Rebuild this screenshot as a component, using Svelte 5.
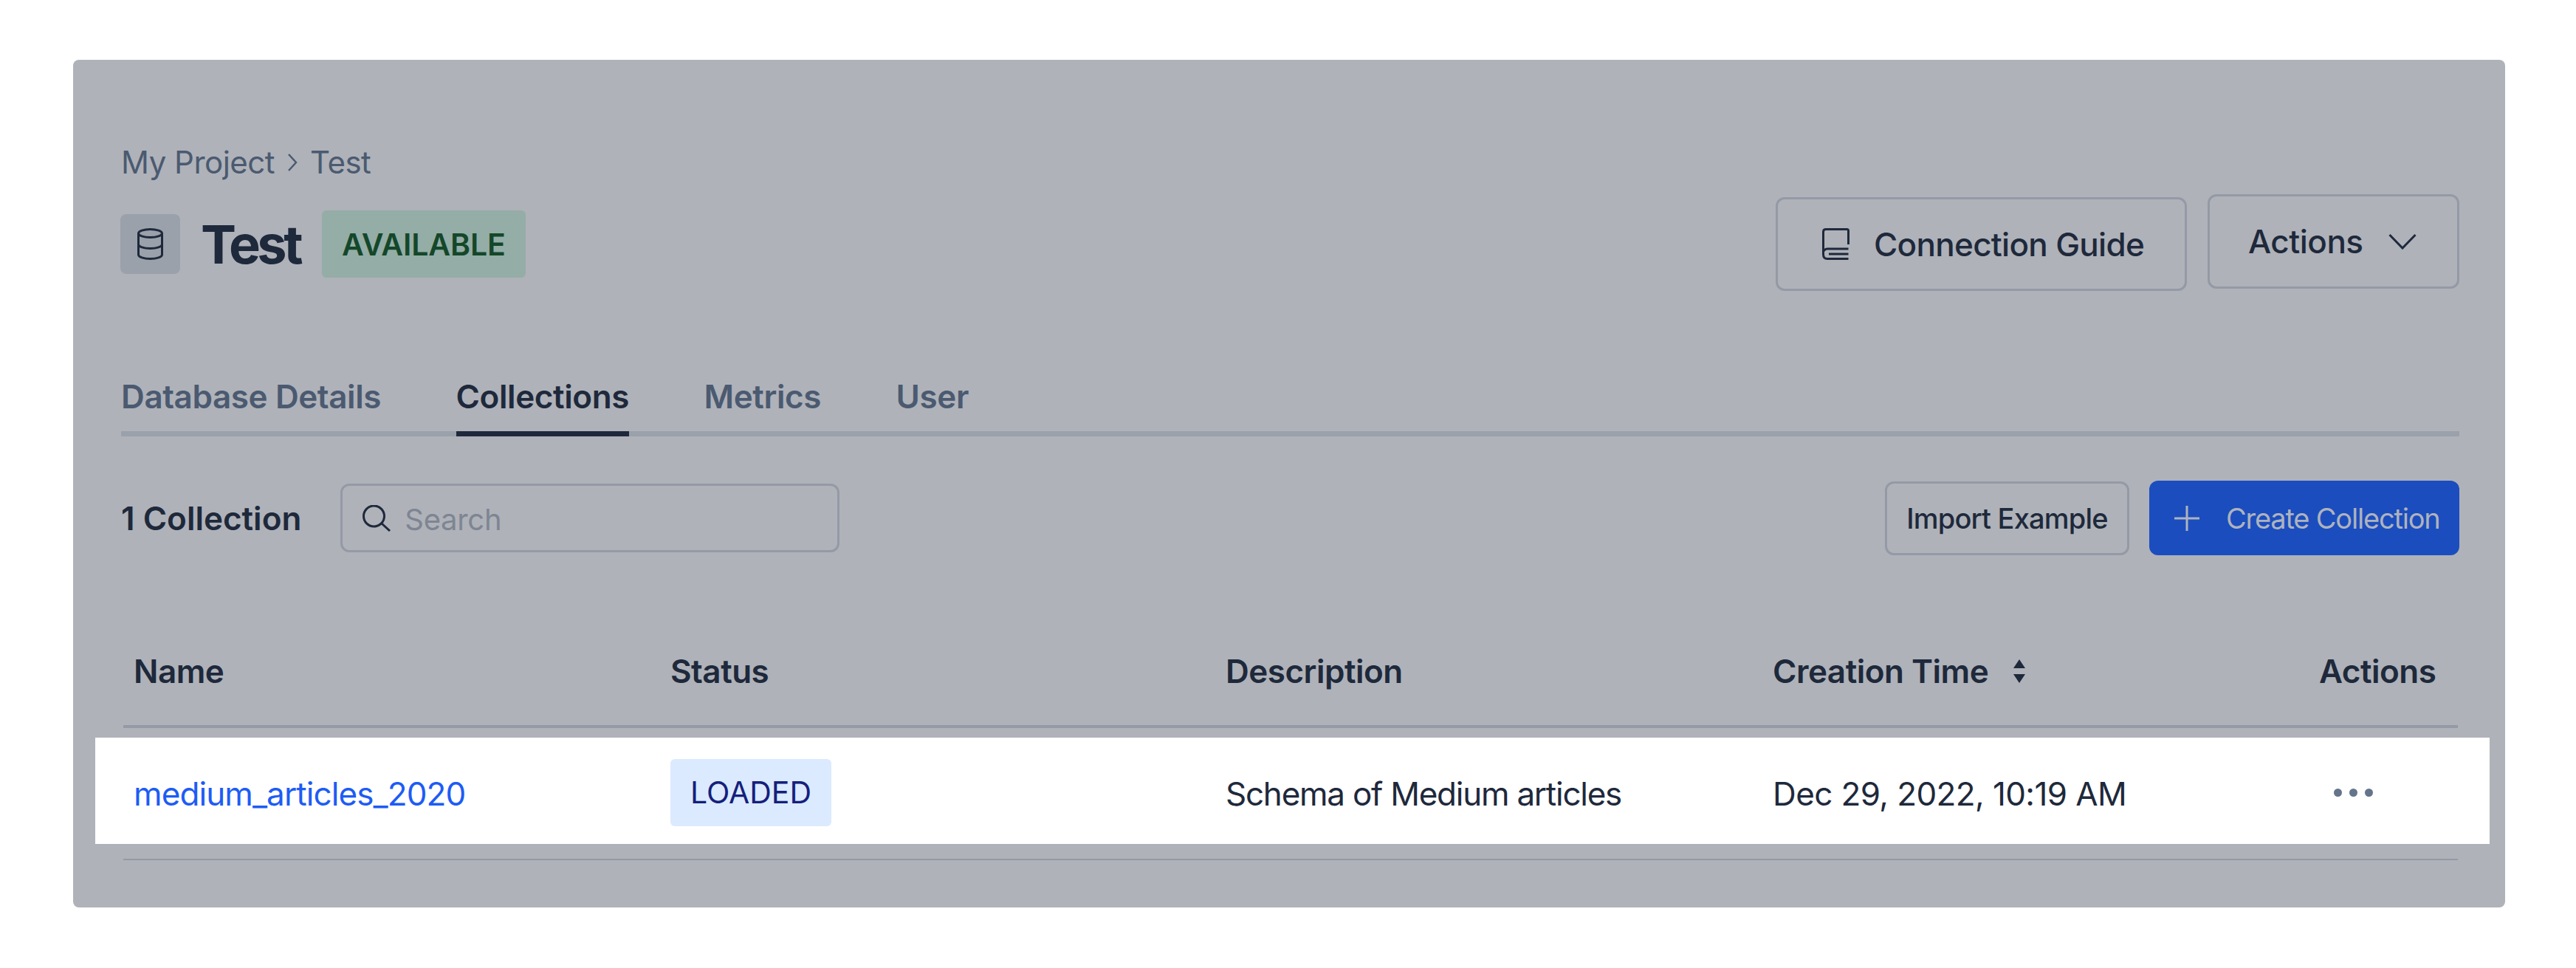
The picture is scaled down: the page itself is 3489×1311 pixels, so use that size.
<script>
  const tabs = ['Database Details', 'Collections', 'Metrics', 'User'];
  const active = 'Collections';
  const columns = ['Name', 'Status', 'Description', 'Creation Time', 'Actions'];
</script>

<main class="panel">
  <header class="head">
    <div class="title-block">
      <nav class="crumbs">
        <span>My Project</span>
        <svg width="16" height="26" viewBox="0 0 16 26" fill="none" stroke="currentColor" stroke-width="2.5"><path d="M3 2l10 11L3 24" /></svg>
        <span>Test</span>
      </nav>
      <div class="title-row">
        <span class="db-icon">
          <svg width="35" height="43" viewBox="0 0 35 43" fill="none" stroke="currentColor" stroke-width="3">
            <ellipse cx="17.500" cy="7" rx="16" ry="5.500" />
            <path d="M1.500 7v29c0 3 7.200 5.500 16 5.500s16-2.500 16-5.500V7" />
            <path d="M1.500 22c0 3 7.200 5.500 16 5.500s16-2.500 16-5.500" />
          </svg>
        </span>
        <h1>Test</h1>
        <span class="available">AVAILABLE</span>
      </div>
    </div>
    <div class="head-actions">
      <button class="outline guide">
        <svg width="37" height="43" viewBox="0 0 37 43" fill="none" stroke="currentColor" stroke-width="3">
          <path d="M35.500 22V3.500q0-2-2-2H5q-3.500 0-3.500 3.500v30.500q0 6 5.500 6h28.500" />
          <path d="M35.500 28H7q-3 0-5 3M9 35h26.500" />
        </svg>
        Connection Guide
      </button>
      <button class="outline menu">
        Actions
        <svg width="38" height="22" viewBox="0 0 38 22" fill="none" stroke="currentColor" stroke-width="3"><path d="M1.500 2L19 20 36.500 2" /></svg>
      </button>
    </div>
  </header>

  <div class="tabs">
    {#each tabs as tab}
      <span class="tab" class:on={tab === active}>{tab}</span>
    {/each}
  </div>

  <div class="toolbar">
    <strong>1 Collection</strong>
    <label class="search">
      <svg width="38" height="36" viewBox="0 0 38 36" fill="none" stroke="#1e293b" stroke-width="3">
        <circle cx="15.500" cy="15" r="14" /><path d="M26 25l11 10" />
      </svg>
      <span>Search</span>
    </label>
    <div class="spacer"></div>
    <button class="outline small">Import Example</button>
    <button class="primary">
      <svg width="36" height="36" viewBox="0 0 36 36" stroke="currentColor" stroke-width="3"><path d="M18 1v34M1 18h34" /></svg>
      Create Collection
    </button>
  </div>

  <section class="table">
    <div class="grid thead">
      {#each columns as col}
        <span class="th">
          {col}
          {#if col === 'Creation Time'}
            <svg width="16" height="32" viewBox="0 0 16 32" fill="currentColor"><path d="M8 0l8 12H0zM8 32L0 20h16z" /></svg>
          {/if}
        </span>
      {/each}
    </div>
    <div class="grid row">
      <span class="cell link">medium_articles_2020</span>
      <span><span class="loaded">LOADED</span></span>
      <span class="cell desc">Schema of Medium articles</span>
      <span class="cell date">Dec 29, 2022, 10:19 AM</span>
      <span class="dots"><i></i><i></i><i></i></span>
    </div>
    <div class="rule"></div>
  </section>
</main>

<style>
  :global(body) {
    background: #fff;
    font-family: Inter, 'Liberation Sans', sans-serif;
  }

  .panel {
    box-sizing: border-box;
    width: 3294px;
    height: 1148px;
    margin: 81px 0 0 99px;
    padding: 113px 62px 0 65px;
    border-radius: 8px;
    background: #afb2b9;
    color: #1e293b;
  }

  .head {
    display: flex;
    justify-content: space-between;
    align-items: flex-start;
  }

  .crumbs {
    display: flex;
    align-items: center;
    gap: 16px;
    height: 52px;
    color: #4b5a70;
    font-size: 42px;
    letter-spacing: -0.5px;
    line-height: 52px;
  }

  .title-row {
    display: flex;
    align-items: center;
    height: 91px;
    margin-top: 39px;
  }

  .db-icon {
    display: flex;
    align-items: center;
    justify-content: center;
    width: 81px;
    height: 81px;
    margin-left: -1px;
    border-radius: 8px;
    background: #9aa1ab;
  }

  h1 {
    margin: 0 30px 0 28px;
    font-size: 72px;
    font-weight: 700;
    letter-spacing: -4.5px;
    line-height: 91px;
  }

  .available {
    display: flex;
    align-items: center;
    height: 91px;
    padding: 0 27px;
    border-radius: 6px;
    background: #94ada6;
    color: #14472a;
    font-size: 41px;
    font-weight: 600;
    letter-spacing: -0.1px;
  }

  .head-actions {
    display: flex;
    align-items: flex-start;
    gap: 28px;
    margin-top: 69px;
  }

  button {
    box-sizing: border-box;
    display: flex;
    align-items: center;
    border-radius: 12px;
    font-family: inherit;
    font-weight: 500;
    white-space: nowrap;
  }

  .outline {
    border: 3px solid #949aa5;
    background: transparent;
    color: #1e293b;
  }

  .guide {
    gap: 33px;
    width: 557px;
    height: 127px;
    margin-top: 4px;
    padding: 0 0 0 60px;
    font-size: 44px;
    letter-spacing: -0.7px;
  }

  .menu {
    gap: 34px;
    width: 341px;
    height: 128px;
    padding: 0 0 0 52px;
    font-size: 44px;
    letter-spacing: -0.5px;
  }

  .tabs {
    display: flex;
    gap: 101.500px;
    margin-top: 116px;
    border-bottom: 7px solid #9aa1ab;
  }

  .tab {
    margin-bottom: -7px;
    padding-bottom: 20px;
    border-bottom: 7px solid transparent;
    color: #4b5a70;
    font-size: 44px;
    font-weight: 600;
    letter-spacing: -0.4px;
    line-height: 54px;
  }

  .tab.on {
    border-color: #1e293b;
    color: #1e293b;
  }

  .toolbar {
    display: flex;
    align-items: center;
    height: 101px;
    margin-top: 60px;
  }

  .toolbar strong {
    margin-right: 53px;
    font-size: 44px;
    font-weight: 600;
  }

  .search {
    box-sizing: border-box;
    display: flex;
    align-items: center;
    gap: 19px;
    width: 676px;
    height: 93px;
    padding-left: 27px;
    border: 3px solid #949aa5;
    border-radius: 12px;
    color: #7e8592;
    font-size: 40px;
    letter-spacing: -0.3px;
  }

  .search span {
    padding-top: 3px;
  }

  .spacer {
    flex: 1;
  }

  .small {
    justify-content: center;
    width: 331px;
    height: 100px;
    margin-right: 27px;
    padding: 0;
    font-size: 38px;
    letter-spacing: -0.8px;
  }

  .primary {
    gap: 35px;
    width: 420px;
    height: 101px;
    padding: 0 0 0 33px;
    border: 0;
    background: #1b4dbe;
    color: #aeb3be;
    font-size: 38px;
    font-weight: 400;
    letter-spacing: -1.2px;
  }

  .table {
    margin-top: 130px;
    margin-left: 3px;
    width: 3162px;
  }

  .grid {
    display: grid;
    grid-template-columns: 727px 752px 741px 740px 1fr;
  }

  .grid > * {
    padding-left: 14px;
  }

  .thead {
    padding-bottom: 46px;
    border-bottom: 4px solid #949aa5;
  }

  .th {
    display: flex;
    align-items: center;
    gap: 34px;
    font-size: 44px;
    font-weight: 600;
    letter-spacing: -0.5px;
    line-height: 54px;
  }

  .row {
    box-sizing: border-box;
    align-items: center;
    height: 144px;
    margin: 13px -43px 0 -38px;
    padding: 4px 43px 0 38px;
    background: #fff;
    font-size: 44px;
  }

  .cell {
    padding-top: 4px;
  }

  .link {
    color: #1d5cf5;
    letter-spacing: -0.9px;
  }

  .desc {
    letter-spacing: -1.25px;
  }

  .date {
    letter-spacing: -0.6px;
  }

  .loaded {
    display: inline-flex;
    align-items: center;
    height: 91px;
    padding: 0 27px;
    border-radius: 6px;
    background: #dbeafe;
    color: #14207c;
    font-size: 41px;
  }

  .dots {
    display: flex;
    gap: 10px;
    padding-left: 34px !important;
  }

  .dots i {
    width: 11px;
    height: 11px;
    border-radius: 50%;
    background: #64748b;
  }

  .rule {
    margin-top: 20px;
    border-top: 2px solid #949aa5;
  }
</style>
